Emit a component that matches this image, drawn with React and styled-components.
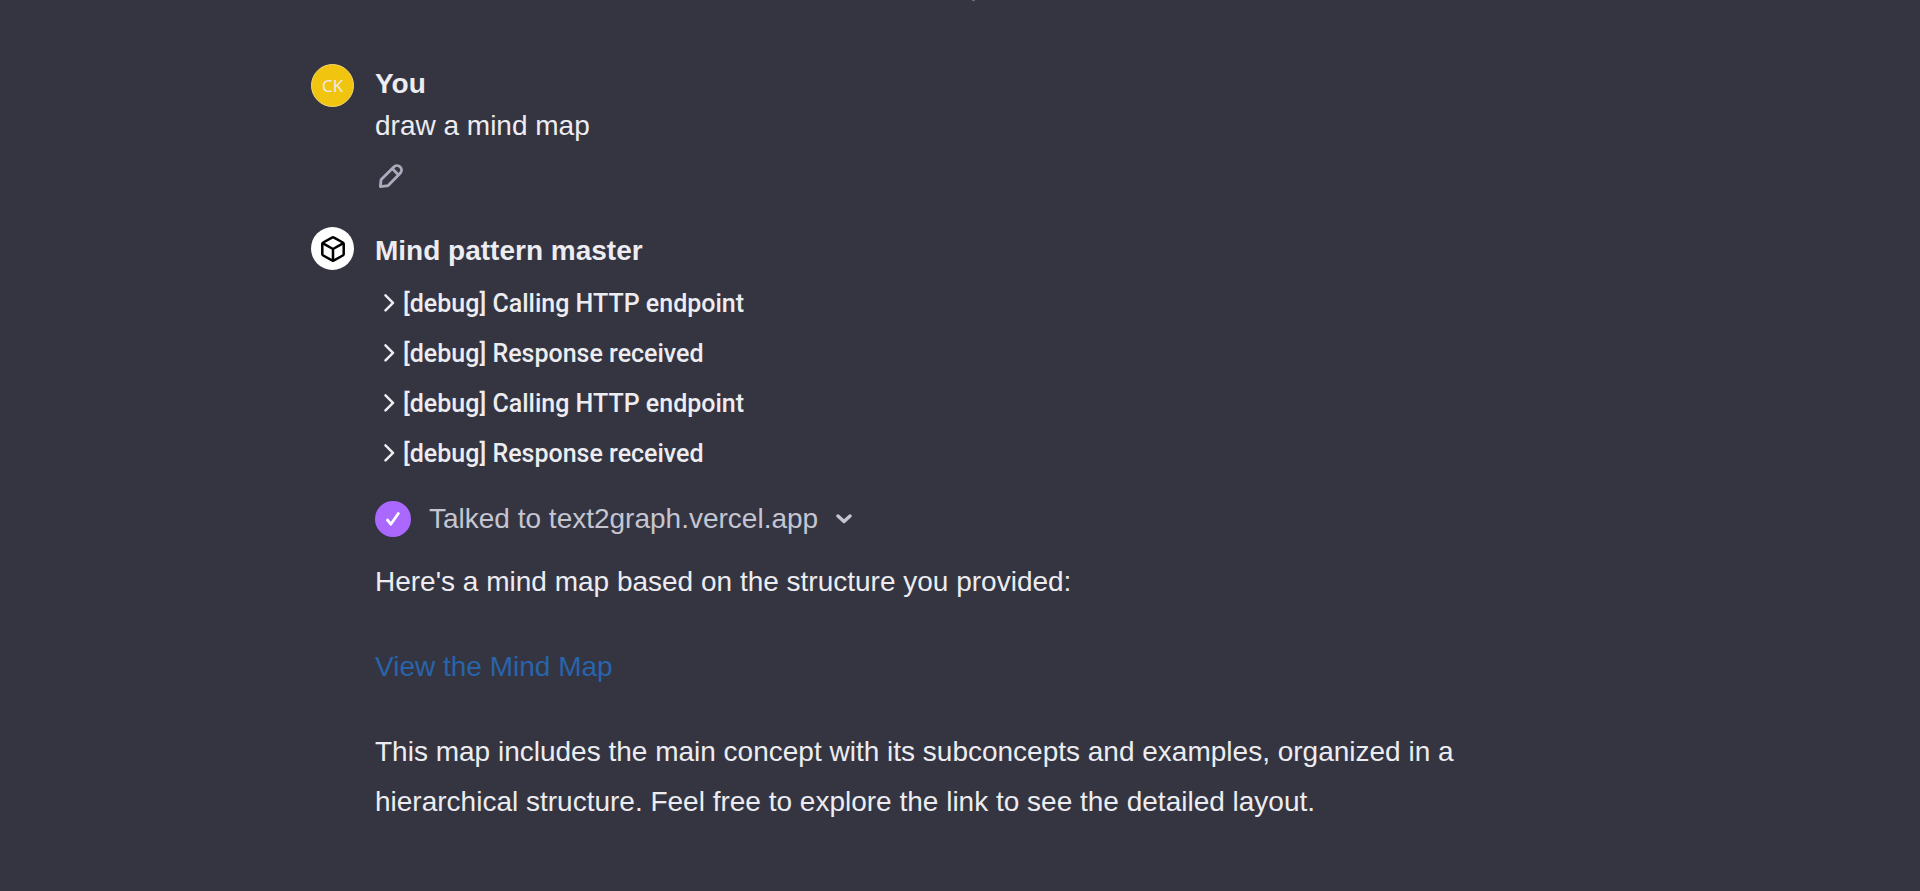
import styled, { createGlobalStyle } from 'styled-components';

const steps = [
  'Calling HTTP endpoint',
  'Response received',
  'Calling HTTP endpoint',
  'Response received',
];

export default function App() {
  return (
    <Page>
      <GlobalStyle />
      <ScrollMark />
      <Thread>
        <Message>
          <UserAvatar>CK</UserAvatar>
          <Content>
            <Author>You</Author>
            <Prompt>draw a mind map</Prompt>
            <IconButton aria-label="Edit message">
              <PencilIcon />
            </IconButton>
          </Content>
        </Message>

        <Message>
          <BotAvatar>
            <CubeIcon />
          </BotAvatar>
          <Content $reply>
            <Author>Mind pattern master</Author>
            <StepList>
              {steps.map((step, index) => (
                <li key={index}>
                  <StepButton>
                    <ChevronRight />
                    [debug] {step}
                  </StepButton>
                </li>
              ))}
            </StepList>
            <ToolButton>
              <CheckBadge>
                <CheckIcon />
              </CheckBadge>
              Talked to text2graph.vercel.app
              <ChevronDown />
            </ToolButton>
            <Body>
              <Text>Here's a mind map based on the structure you provided:</Text>
              <Text>
                <MapLink href="#mind-map">View the Mind Map</MapLink>
              </Text>
              <Text>
                This map includes the main concept with its subconcepts and examples, organized in a
                hierarchical structure. Feel free to explore the link to see the detailed layout.
              </Text>
            </Body>
          </Content>
        </Message>
      </Thread>
    </Page>
  );
}

// Icons

function PencilIcon() {
  return (
    <svg width="24" height="24" viewBox="0 0 24 24" fill="none" stroke="currentColor" strokeWidth="2.8" strokeLinejoin="round">
      <path d="M2 15.800 14.800 2.900a4.500 4.500 0 0 1 6.400 6.400L9.200 21.600 1.400 22.600Z" />
      <path d="m13.200 4.500 6.400 6.400" />
    </svg>
  );
}

function CubeIcon() {
  return (
    <svg width="26" height="28" viewBox="0 0 26 28" fill="none" stroke="currentColor" strokeWidth="2.5" strokeLinejoin="round" strokeLinecap="round">
      <path d="M12 2.600Q13 2 14 2.600L22.800 7.500Q23.700 8 23.700 9V19Q23.700 20 22.800 20.500L14 25.400Q13 26 12 25.400L3.200 20.500Q2.300 20 2.300 19V9Q2.300 8 3.200 7.500Z" />
      <path d="m3 8.400 10 5.600 10-5.600M13 14v11.500" />
    </svg>
  );
}

function ChevronRight() {
  return (
    <svg width="12" height="20" viewBox="0 0 12 20" fill="none" stroke="currentColor" strokeWidth="2.5" strokeLinecap="round" strokeLinejoin="round">
      <path d="m2.500 1.300 7.500 7.500-7.500 7.500" />
    </svg>
  );
}

function ChevronDown() {
  return (
    <svg width="16" height="12" viewBox="0 0 16 12" fill="none" stroke="currentColor" strokeWidth="3.4" strokeLinecap="round" strokeLinejoin="round">
      <path d="m2 3 6 5.500L14 3" />
    </svg>
  );
}

function CheckIcon() {
  return (
    <svg width="16" height="16" viewBox="0 0 16 16" fill="none" stroke="currentColor" strokeWidth="2.8" strokeLinejoin="round">
      <path d="m1.800 8.200 4 5L14 1.500" />
    </svg>
  );
}

// Styled Components

const GlobalStyle = createGlobalStyle`
  * {
    box-sizing: border-box;
  }

  body {
    margin: 0;
    background-color: #343541;
    color: #ececf1;
    font-family: 'Liberation Sans', Arial, sans-serif;
    font-size: 28px;
  }

  button {
    padding: 0;
    border: none;
    background: none;
    color: inherit;
    font: inherit;
    cursor: pointer;
  }

  svg {
    display: block;
    flex-shrink: 0;
  }
`;

const Page = styled.main`
  min-height: 100vh;
  padding: 0 24px 64px;
`;

/* Last pixel row of the content scrolled off above */
const ScrollMark = styled.div`
  width: 3px;
  height: 1px;
  margin-left: calc(50% + 12px);
  background-color: #6b6c7b;
`;

const Thread = styled.div`
  display: flex;
  flex-direction: column;
  gap: 35px;
  max-width: 1298px;
  margin: 0 auto;
  padding-top: 63px;
`;

const Message = styled.article`
  display: flex;
  align-items: flex-start;
  gap: 21px;
`;

const Avatar = styled.div`
  display: flex;
  align-items: center;
  justify-content: center;
  flex-shrink: 0;
  width: 43px;
  height: 43px;
  border-radius: 50%;
`;

const UserAvatar = styled(Avatar)`
  border: 1px solid #f8d96c;
  background-color: #f1c40f;
  font-family: 'Open Sans', sans-serif;
  font-size: 17px;
  line-height: 20px;
`;

const BotAvatar = styled(Avatar)`
  background-color: #fff;
  color: #000;
`;

const Content = styled.div`
  flex: 1;
  min-width: 0;
  padding-top: ${(props) => (props.$reply ? '4px' : '0')};
`;

const Author = styled.h2`
  margin: 0;
  font-size: 28px;
  font-weight: bold;
  line-height: 40px;
`;

const Text = styled.p`
  margin: 0;
  line-height: 50px;
`;

const Prompt = styled(Text)`
  line-height: 44px;
`;

const IconButton = styled.button`
  display: block;
  margin-top: 12px;
  padding: 4px;
  color: #acacbe;
`;

const StepList = styled.ul`
  margin: 8px 0 0;
  padding: 0;
  list-style: none;
`;

const StepButton = styled.button`
  display: flex;
  align-items: center;
  gap: 8px;
  padding-left: 8px;
  font-family: Roboto, sans-serif;
  font-size: 25px;
  font-weight: 500;
  line-height: 50px;
`;

const ToolButton = styled.button`
  display: flex;
  align-items: center;
  gap: 18px;
  margin-top: 21px;
  color: #c5c5d2;
  line-height: 38px;
`;

const CheckBadge = styled.span`
  display: flex;
  align-items: center;
  justify-content: center;
  width: 36px;
  height: 36px;
  border-radius: 50%;
  background-color: #ab68ff;
  color: #fff;
`;

const Body = styled.div`
  display: flex;
  flex-direction: column;
  gap: 35px;
  margin-top: 19px;
  padding-right: 24px;
`;

const MapLink = styled.a`
  color: #2964aa;
  text-decoration: none;
`;
